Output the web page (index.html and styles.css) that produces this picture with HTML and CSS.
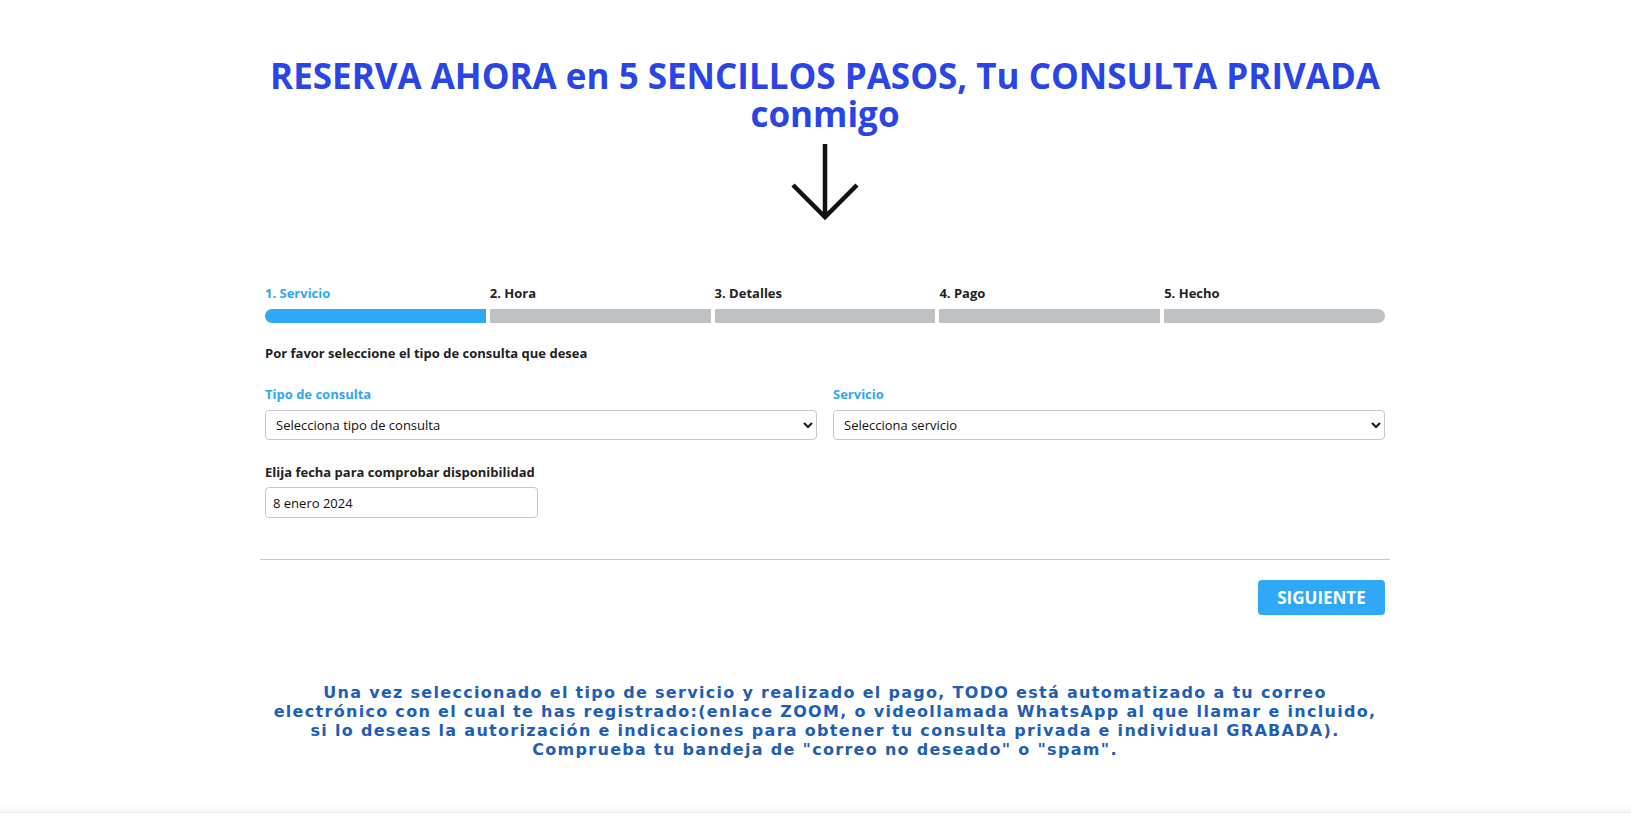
FILE: index.html
```html
<!DOCTYPE html>
<html lang="es">
<head>
  <meta charset="UTF-8" />
  <meta name="viewport" content="width=device-width, initial-scale=1.0" />
  <title>Reserva tu consulta</title>
  <link rel="stylesheet" href="styles.css">
</head>

<body>
  <div class="page">

    <!-- TITULO -->
    <h1 class="title">RESERVA AHORA en 5 SENCILLOS PASOS, Tu CONSULTA PRIVADA<br>conmigo</h1>

    <div class="arrow">
      <svg width="70" height="80" viewBox="0 0 70 80">
        <path d="M35 1 V75 M3 42 L35 74 L67 42" fill="none" stroke="#111" stroke-width="4.5" />
      </svg>
    </div>

    <!-- WIZARD -->
    <div class="wizard">
      <div class="wizard-body">
        <div class="steps">
          <div class="step active"><span>1. Servicio</span><div class="bar"></div></div>
          <div class="step"><span>2. Hora</span><div class="bar"></div></div>
          <div class="step"><span>3. Detalles</span><div class="bar"></div></div>
          <div class="step"><span>4. Pago</span><div class="bar"></div></div>
          <div class="step"><span>5. Hecho</span><div class="bar"></div></div>
        </div>

        <p class="intro">Por favor seleccione el tipo de consulta que desea</p>

        <div class="row">
          <div class="field">
            <label class="blue">Tipo de consulta</label>
            <select>
              <option>Selecciona tipo de consulta</option>
            </select>
          </div>
          <div class="field">
            <label class="blue">Servicio</label>
            <select>
              <option>Selecciona servicio</option>
            </select>
          </div>
        </div>

        <div class="field date">
          <label>Elija fecha para comprobar disponibilidad</label>
          <input type="text" value="8 enero 2024">
        </div>
      </div>

      <hr>

      <div class="actions">
        <button>SIGUIENTE</button>
      </div>
    </div>

    <!-- AVISO -->
    <p class="notice">
      Una vez seleccionado el tipo de servicio y realizado el pago, TODO está automatizado a tu correo<br>
      electrónico con el cual te has registrado:(enlace ZOOM, o videollamada WhatsApp al que llamar e incluido,<br>
      si lo deseas la autorización e indicaciones para obtener tu consulta privada e individual GRABADA).<br>
      Comprueba tu bandeja de "correo no deseado" o "spam".
    </p>
  </div>

  <footer></footer>
</body>
</html>
```

FILE: styles.css
```css
body {
  margin: 0;
  font-family: "Open Sans", Arial, sans-serif;
  background: #fff;
  color: #222;
}

.page {
  padding-left: 19px;
  height: 812px;
  overflow: hidden;
}

/* TITULO */
.title {
  margin: 57px 0 0;
  text-align: center;
  font-size: 35px;
  line-height: 38px;
  font-weight: 700;
  color: #2a45e6;
}

.arrow {
  display: flex;
  justify-content: center;
  margin-top: 10px;
  height: 80px;
}

/* WIZARD */
.wizard {
  width: 1130px;
  margin: 60px auto 0;
}

.wizard-body {
  padding: 0 5px;
}

.steps {
  display: flex;
  gap: 4px;
}

.step {
  flex: 1;
}

.step span {
  display: block;
  font-size: 13px;
  line-height: 20px;
  font-weight: 700;
  color: #222;
  margin-bottom: 6px;
}

.step .bar {
  height: 14px;
  background: #bec2c5;
}

.step:first-child .bar {
  border-radius: 7px 0 0 7px;
}

.step:last-child .bar {
  border-radius: 0 7px 7px 0;
}

.step.active span {
  color: #2ea8f5;
}

.step.active .bar {
  background: #2fa8f8;
}

.intro {
  margin: 20px 0 0;
  font-size: 13px;
  line-height: 20px;
  font-weight: 700;
}

.row {
  display: flex;
  gap: 16px;
  margin-top: 21px;
}

.row .field {
  flex: 1;
}

.field label {
  display: block;
  font-size: 13px;
  line-height: 20px;
  font-weight: 700;
  margin-bottom: 6px;
}

.field label.blue {
  color: #2ea8f5;
}

.field select,
.field input {
  font-family: "Open Sans", Arial, sans-serif;
  font-size: 13px;
  color: #111;
  background: #fff;
  border: 1px solid #c5c5cc;
  border-radius: 4px;
  box-sizing: border-box;
}

.field select {
  width: 100%;
  height: 30px;
  padding: 0 6px;
}

.date {
  margin-top: 22px;
}

.date label {
  margin-bottom: 5px;
}

.date input {
  width: 273px;
  height: 31px;
  padding: 0 7px;
}

hr {
  margin: 41px 0 0;
  border: none;
  border-top: 1px solid #c8c8c8;
}

.actions {
  display: flex;
  justify-content: flex-end;
  padding: 20px 5px 0;
}

.actions button {
  background: #2fa8f8;
  color: #fff;
  border: none;
  border-radius: 4px;
  width: 127px;
  height: 35px;
  font-family: "Open Sans", Arial, sans-serif;
  font-size: 17px;
  font-weight: 700;
  cursor: pointer;
}

/* AVISO */
.notice {
  margin: 68px 0 0;
  text-align: center;
  font-family: "DejaVu Sans", Verdana, sans-serif;
  font-size: 16px;
  line-height: 19px;
  font-weight: 700;
  letter-spacing: 1.3px;
  color: #1e5eb4;
}

footer {
  height: 18px;
  border-top: 1px solid #ececec;
  box-shadow: 0 -4px 6px rgba(0, 0, 0, 0.04);
}
```
